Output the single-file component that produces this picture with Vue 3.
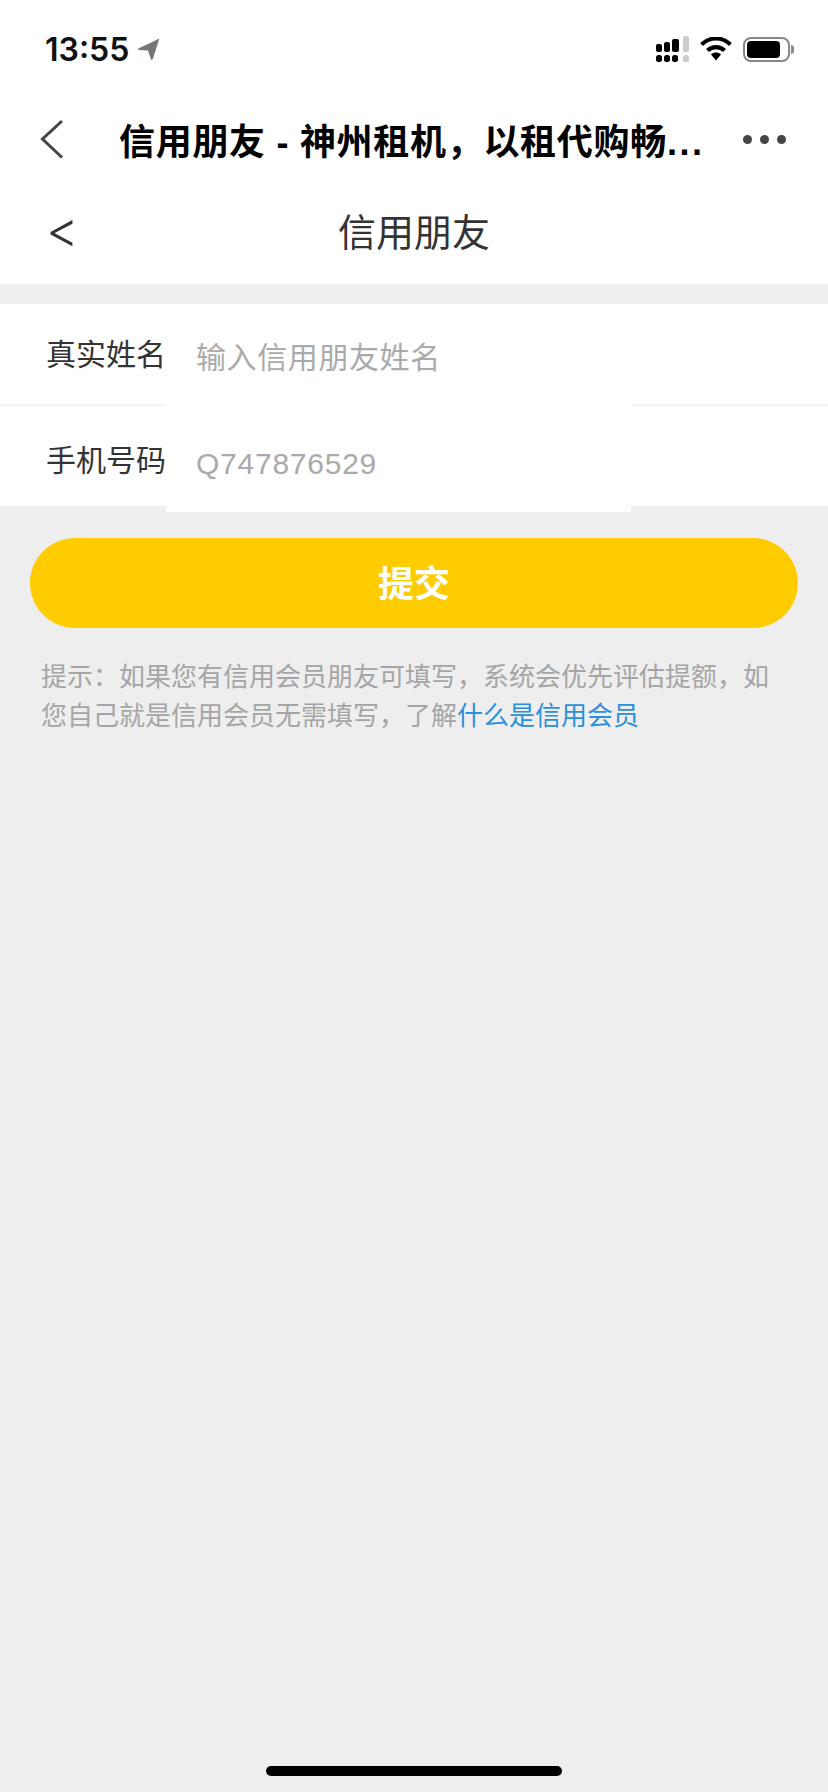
<template>
  <div class="page">
    <div class="status-bar">
      <div class="status-left">
        <span class="time">13:55</span>
        <svg class="location" width="22" height="22" viewBox="0 0 22 22">
          <path d="M21.4 0.4 L0.4 10.6 Q-0.2 12 1 12 L10 12.6 L13 21.4 Q14 22.4 14.8 21 Z" fill="#777" />
        </svg>
      </div>
      <div class="status-right">
        <svg width="34" height="27" viewBox="0 0 34 27">
          <rect x="1" y="8" width="6" height="8" rx="2" fill="#000" />
          <rect x="9" y="6" width="6" height="10" rx="2" fill="#000" />
          <rect x="17" y="3" width="7" height="13" rx="2" fill="#000" />
          <rect x="28" y="0" width="6" height="16" rx="2" fill="#ccc" />
          <rect x="1" y="19" width="6" height="7" rx="2.5" fill="#000" />
          <rect x="9" y="19" width="6" height="7" rx="2.5" fill="#000" />
          <rect x="17" y="19" width="6" height="7" rx="2.5" fill="#000" />
          <rect x="28" y="19" width="6" height="7" rx="2.5" fill="#ccc" />
        </svg>
        <svg class="wifi" width="32" height="24" viewBox="0 0 32 24">
          <path d="M1.5 7.5 C10 -0.5 22 -0.5 30.5 7.5" fill="none" stroke="#000" stroke-width="4.2" />
          <path d="M7.5 13.5 C12.5 9 19.5 9 24.5 13.5" fill="none" stroke="#000" stroke-width="4.2" />
          <path d="M11 17.4 C14 15 18 15 21 17.4 L16 23.6 Z" fill="#000" />
        </svg>
        <div class="battery">
          <div class="battery-body"><div class="battery-fill"></div></div>
          <div class="battery-nub"></div>
        </div>
      </div>
    </div>

    <div class="nav-bar">
      <svg class="nav-back" width="24" height="40" viewBox="0 0 24 40">
        <path d="M22 2 L2.5 20 L22 38.5" fill="none" stroke="#444" stroke-width="3" />
      </svg>
      <div class="nav-title">信用朋友 - 神州租机，以租代购畅<span class="nav-ellipsis">...</span></div>
      <div class="nav-more">
        <i></i><i></i><i></i>
      </div>
    </div>

    <div class="page-header">
      <span class="header-back">&lt;</span>
      <span class="header-title">信用朋友</span>
    </div>

    <div class="form">
      <div class="row row-name">
        <label class="row-label" for="friendName">真实姓名</label>
        <input id="friendName" class="row-input" type="text" placeholder="输入信用朋友姓名" />
      </div>
      <div class="row row-phone">
        <label class="row-label" for="friendPhone">手机号码</label>
        <input id="friendPhone" class="row-input" type="text" placeholder="Q747876529" />
      </div>
    </div>

    <button class="btn-submit" type="button">提交</button>

    <p class="hint">提示：如果您有信用会员朋友可填写，系统会优先评估提额，如<br />您自己就是信用会员无需填写，了解<a class="hint-link">什么是信用会员</a></p>

    <div class="home-bar"></div>
  </div>
</template>

<script setup>
</script>

<style>
body {
  background-color: #eeeeee;
}
</style>

<style scoped>
.page {
  display: flex;
  flex-direction: column;
  height: 1792px;
  overflow: hidden;
  background-color: #eeeeee;
  font-family: "Liberation Sans", "Noto Sans CJK SC", sans-serif;
}
.status-bar {
  display: flex;
  justify-content: space-between;
  align-items: center;
  flex-shrink: 0;
  height: 88px;
  padding: 10px 34px 0 45px;
  box-sizing: border-box;
  background-color: #ffffff;
}
.status-left {
  display: flex;
  align-items: center;
}
.time {
  margin-top: 2px;
  font-family: Inter, "Liberation Sans", sans-serif;
  font-size: 32px;
  font-weight: 600;
  line-height: 38px;
  color: #111;
}
.location {
  margin-left: 9px;
}
.status-right {
  display: flex;
  align-items: center;
}
.wifi {
  margin-left: 11px;
}
.battery {
  display: flex;
  align-items: center;
  margin-left: 11px;
}
.battery-body {
  width: 47px;
  height: 25px;
  padding: 2px;
  box-sizing: border-box;
  border: 2px solid #888;
  border-radius: 8px;
}
.battery-fill {
  width: 33px;
  height: 100%;
  background-color: #000;
  border-radius: 4px;
}
.battery-nub {
  width: 3px;
  height: 9px;
  margin-left: 1px;
  background-color: #888;
  border-radius: 0 3px 3px 0;
}
.nav-bar {
  display: flex;
  align-items: center;
  flex-shrink: 0;
  height: 102px;
  padding-left: 40px;
  background-color: #ffffff;
}
.nav-title {
  margin-left: 55px;
  width: 601px;
  font-size: 36px;
  font-weight: 700;
  letter-spacing: 0.7px;
  color: #000;
  white-space: nowrap;
}
.nav-ellipsis {
  letter-spacing: 2.5px;
}
.nav-more {
  display: flex;
  gap: 8px;
  margin-left: 23px;
}
.nav-more i {
  width: 9px;
  height: 9px;
  border-radius: 50%;
  background-color: #444;
}
.page-header {
  display: flex;
  align-items: center;
  justify-content: center;
  position: relative;
  flex-shrink: 0;
  height: 94px;
  padding-bottom: 16px;
  box-sizing: border-box;
  background-color: #ffffff;
}
.header-back {
  position: absolute;
  left: 46px;
  top: 0;
  font-family: Inter, "Liberation Sans", sans-serif;
  font-size: 50px;
  line-height: 78px;
  font-weight: 300;
  color: #333;
}
.header-title {
  font-size: 38px;
  color: #333;
}
.form {
  flex-shrink: 0;
  margin-top: 20px;
  height: 202px;
  background-color: #ffffff;
}
.row {
  display: flex;
  align-items: flex-start;
  padding-left: 46px;
}
.row-name {
  height: 102px;
  box-sizing: border-box;
  border-bottom: 2px solid #f3f3f3;
}
.row-phone {
  height: 100px;
}
.row-label {
  flex: 0 0 120px;
  font-size: 30px;
  line-height: 102px;
  color: #333;
}
.row-phone .row-label {
  padding-top: 4px;
}
.row-input {
  flex: 0 0 465px;
  box-sizing: border-box;
  padding: 0 0 0 30px;
  border: none;
  outline: none;
  background-color: #ffffff;
  font-family: inherit;
  font-size: 30px;
  letter-spacing: 0.6px;
  color: #333;
}
.row-input::placeholder {
  color: #aaaaaa;
  opacity: 1;
}
.row-name .row-input {
  height: 108px;
  margin-bottom: -8px;
}
.row-phone .row-input {
  height: 106px;
  padding-top: 10px;
  margin-bottom: -6px;
  letter-spacing: 0.75px;
}
.btn-submit {
  flex-shrink: 0;
  margin: 32px 30px 0;
  height: 90px;
  padding: 0 0 4px;
  border: none;
  border-radius: 45px;
  background-color: #ffcc00;
  color: #ffffff;
  font-family: inherit;
  font-size: 36px;
  font-weight: 700;
}
.hint {
  margin: 30px 41px 0;
  font-size: 26px;
  line-height: 39px;
  color: #a5a5a5;
}
.hint-link {
  color: #2a8fdc;
}
.home-bar {
  flex-shrink: 0;
  width: 296px;
  height: 10px;
  margin: auto auto 16px;
  border-radius: 5px;
  background-color: #000;
}
</style>
